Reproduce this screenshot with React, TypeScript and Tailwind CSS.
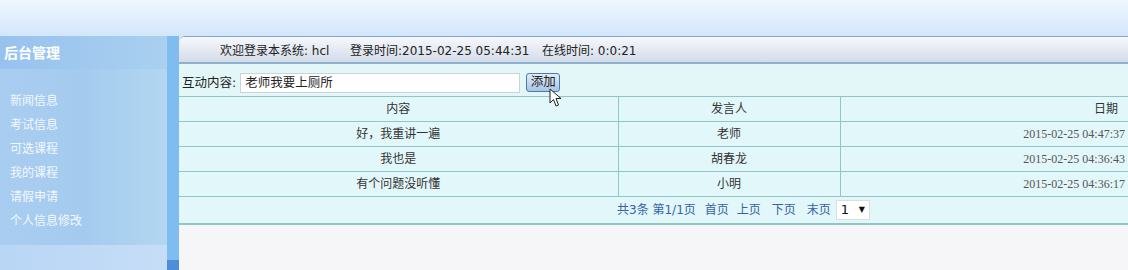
import React from "react";

const cn = '"DejaVu Sans", "Noto Sans CJK SC", sans-serif';

const menu = ["新闻信息", "考试信息", "可选课程", "我的课程", "请假申请", "个人信息修改"];

const rows = [
  { text: "好，我重讲一遍", who: "老师", date: "2015-02-25 04:47:37" },
  { text: "我也是", who: "胡春龙", date: "2015-02-25 04:36:43" },
  { text: "有个问题没听懂", who: "小明", date: "2015-02-25 04:36:17" },
];

function Cursor() {
  return (
    <svg width="14" height="20" viewBox="0 0 14 20" className="absolute left-[549px] top-[88px]">
      <path d="M1 1 L1 15 L4.5 11.5 L7 18 L9.5 17 L7 10.5 L12 10.5 Z" fill="#fff" stroke="#222" strokeWidth="1" strokeLinejoin="round" />
    </svg>
  );
}

export default function App() {
  return (
    <div className="relative w-[1128px] h-[270px] overflow-hidden flex flex-col bg-[#d8eafa]" style={{ fontFamily: cn }}>
      <div className="h-[36px] shrink-0 bg-gradient-to-b from-[#eef6fe] to-[#d3e7fa]" />
      <div className="flex flex-1 min-h-0">
        <aside className="w-[167px] shrink-0 flex flex-col bg-gradient-to-r from-[#a9cdf0] via-[#a4cbef] to-[#b3d7f1]">
          <div className="h-[33px] flex items-center pl-[4px] pt-[1px] text-[14px] font-bold text-white bg-gradient-to-r from-[#98c2ee] to-[#a9d0f0]">
            后台管理
          </div>
          <ul className="pt-[23px] pl-[10px] flex flex-col gap-[6px] text-[12px] leading-[18px] text-[#f3f8ff]">
            {menu.map((m) => (
              <li key={m}>{m}</li>
            ))}
          </ul>
          <div className="mt-auto h-[25px] bg-gradient-to-r from-[#b8d6f5] to-[#c6ddf7]" />
        </aside>
        <div className="w-[12px] shrink-0 flex flex-col bg-[#7fbdf1]">
          <div className="mt-auto h-[10px] bg-[#4c8fd8]" />
        </div>
        <main className="flex-1 flex flex-col bg-[#f6f6f9] rounded-tl-[6px] overflow-hidden border-t border-[#7fa6cc]">
          <div className="h-[27px] shrink-0 flex items-center pt-[2px] pl-[41px] text-[12px] text-[#222] bg-gradient-to-b from-[#f8f8fc] to-[#d2dce8] border-b-2 border-[#8fb0cf]">
            <span className="w-[130px]">欢迎登录本系统: hcl</span>
            <span className="w-[192px]">登录时间:2015-02-25 05:44:31</span>
            <span>在线时间: 0:0:21</span>
          </div>
          <div className="h-[32px] shrink-0 flex items-end pb-[3px] pl-[3px] bg-[#e3f7f9] text-[12.5px] text-[#222]">
            <span className="mr-[4px] leading-[20px]">互动内容:</span>
            <div className="w-[280px] h-[20px] bg-white border border-[#c9d3d8] flex items-center pl-[4px] text-[12.5px]">
              老师我要上厕所
            </div>
            <button className="ml-[6px] mb-[1px] w-[34px] h-[19px] rounded-[3px] border border-[#4b7cae] bg-gradient-to-b from-[#e2edf8] to-[#a8c4e4] text-[12.5px] leading-none text-[#222]">
              添加
            </button>
          </div>
          <table className="w-full table-fixed border-collapse bg-[#e2f7f9] text-[12px] text-[#333]">
            <colgroup>
              <col className="w-[439px]" />
              <col className="w-[222px]" />
              <col />
            </colgroup>
            <thead>
              <tr className="h-[25px]">
                <th className="font-normal border border-[#8fc6c6] border-l-0">内容</th>
                <th className="font-normal border border-[#8fc6c6]">发言人</th>
                <th className="font-normal border border-[#8fc6c6] border-r-0 text-right pr-[10px]">日期</th>
              </tr>
            </thead>
            <tbody>
              {rows.map((r) => (
                <tr key={r.date} className="h-[25px]">
                  <td className="text-center border border-[#8fc6c6] border-l-0">{r.text}</td>
                  <td className="text-center border border-[#8fc6c6]">{r.who}</td>
                  <td
                    className="text-right pr-[3px] border border-[#8fc6c6] border-r-0 text-[12px] text-[#555]"
                    style={{ fontFamily: '"Liberation Serif", serif' }}
                  >
                    {r.date}
                  </td>
                </tr>
              ))}
              <tr className="h-[27px]">
                <td colSpan={3} className="border-b-2 border-[#8fc6c6]">
                  <div className="flex items-center pl-[438px] text-[12px] text-[#3561a8]">
                    <span className="mr-[9px]">共3条 第1/1页</span>
                    <span className="mr-[8px]">首页</span>
                    <span className="mr-[11px]">上页</span>
                    <span className="mr-[11px]">下页</span>
                    <span className="mr-[5px]">末页</span>
                    <div className="w-[34px] h-[20px] bg-white border border-[#ddd] flex items-center justify-between px-[4px] text-[13px] text-[#111]">
                      <span>1</span>
                      <span className="text-[8px]">▼</span>
                    </div>
                  </div>
                </td>
              </tr>
            </tbody>
          </table>
        </main>
      </div>
      <Cursor />
    </div>
  );
}
